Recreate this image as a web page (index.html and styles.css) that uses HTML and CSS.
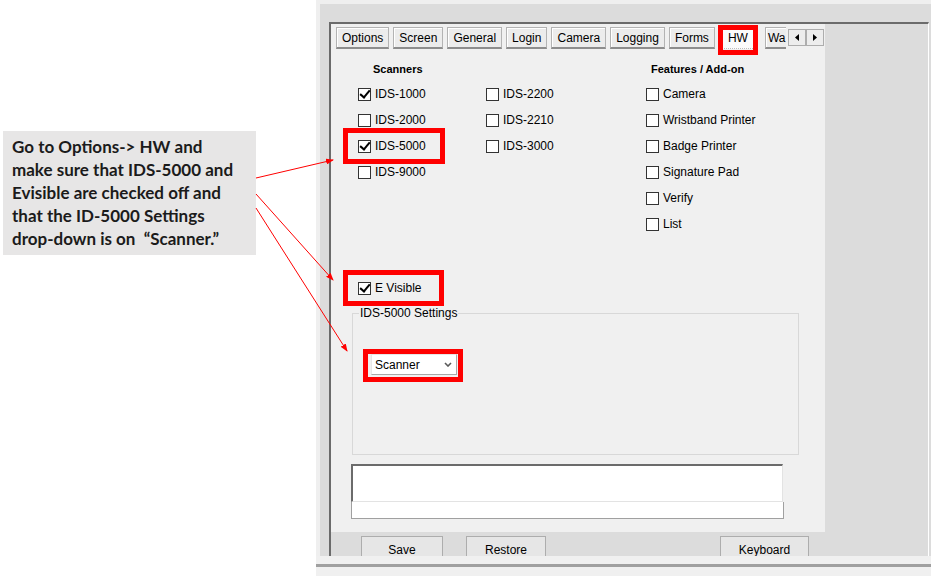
FILE: index.html
```html
<!DOCTYPE html>
<html lang="en">
<head>
  <meta charset="UTF-8" />
  <title>Options - HW</title>
  <link rel="stylesheet" href="styles.css">
</head>
<body>
<div class="page">

  <div class="note-col">
    <div class="note">
      Go to Options-&gt; HW and<br>
      make sure that IDS-5000 and<br>
      Evisible are checked off and<br>
      that the ID-5000 Settings<br>
      drop-down is on &nbsp;“Scanner.”
    </div>
  </div>

  <div class="app">
    <div class="window">
      <div class="frame">
        <div class="frame-top">
          <div class="tabctl">
            <div class="tabbar">
              <div class="tabs">
                <span class="tab">Options</span>
                <span class="tab">Screen</span>
                <span class="tab">General</span>
                <span class="tab">Login</span>
                <span class="tab">Camera</span>
                <span class="tab">Logging</span>
                <span class="tab">Forms</span>
                <span class="tab active hl hl-tab">HW</span>
                <span class="tab tab-cut">Wa</span>
              </div>
              <div class="scroll">
                <span class="arrow">
                  <svg width="4" height="7" viewBox="0 0 4 7"><polygon points="4,0 4,7 0,3.5" fill="#000"/></svg>
                </span>
                <span class="arrow">
                  <svg width="4" height="7" viewBox="0 0 4 7"><polygon points="0,0 0,7 4,3.5" fill="#000"/></svg>
                </span>
              </div>
            </div>

            <div class="tab-page">
              <div class="cols">
                <div class="group-scan">
                  <div class="heading">Scanners</div>
                  <div class="scan-grid">
                    <div class="checklist list-a">
                      <label class="check"><span class="box on"></span>IDS-1000</label>
                      <label class="check"><span class="box"></span>IDS-2000</label>
                      <label class="check hl hl-row"><span class="box on"></span>IDS-5000</label>
                      <label class="check"><span class="box"></span>IDS-9000</label>
                    </div>
                    <div class="checklist">
                      <label class="check"><span class="box"></span>IDS-2200</label>
                      <label class="check"><span class="box"></span>IDS-2210</label>
                      <label class="check"><span class="box"></span>IDS-3000</label>
                    </div>
                  </div>
                </div>
                <div class="group-feat">
                  <div class="heading">Features / Add-on</div>
                  <div class="checklist">
                    <label class="check"><span class="box"></span>Camera</label>
                    <label class="check"><span class="box"></span>Wristband Printer</label>
                    <label class="check"><span class="box"></span>Badge Printer</label>
                    <label class="check"><span class="box"></span>Signature Pad</label>
                    <label class="check"><span class="box"></span>Verify</label>
                    <label class="check"><span class="box"></span>List</label>
                  </div>
                </div>
              </div>

              <label class="check evisible hl hl-row"><span class="box on"></span>E Visible</label>

              <fieldset class="settings">
                <legend>IDS-5000 Settings</legend>
                <div class="combo hl hl-combo">
                  <span>Scanner</span>
                  <svg width="8" height="5" viewBox="0 0 8 5"><path d="M1 1 L4 4 L7 1" fill="none" stroke="#5a5a5a" stroke-width="1.6"/></svg>
                </div>
              </fieldset>

              <div class="memo"></div>
              <div class="memo-bar"></div>
            </div>
          </div>
        </div>

        <div class="button-row">
          <span class="btn btn-save">Save</span>
          <span class="btn btn-restore">Restore</span>
          <span class="btn btn-keyboard">Keyboard</span>
        </div>
      </div>
    </div>
    <div class="status"><div class="status-line"></div></div>
  </div>

  <!-- callout arrows drawn over the screenshot -->
  <svg class="arrows" width="931" height="576" viewBox="0 0 931 576">
    <defs>
      <marker id="head" markerWidth="8" markerHeight="6" refX="7" refY="3" orient="auto" markerUnits="userSpaceOnUse">
        <polygon points="0,0 8,3 0,6" fill="#ff0000"/>
      </marker>
    </defs>
    <line x1="256" y1="178" x2="333" y2="160" stroke="#ff0000" stroke-width="1" marker-end="url(#head)"/>
    <line x1="256" y1="194" x2="333" y2="280" stroke="#ff0000" stroke-width="1" marker-end="url(#head)"/>
    <line x1="256" y1="208" x2="347" y2="351" stroke="#ff0000" stroke-width="1" marker-end="url(#head)"/>
  </svg>
</div>
</body>
</html>
```

FILE: styles.css
```css
* {
  box-sizing: border-box;
}

body {
  margin: 0;
  background: #fff;
  font-family: "Liberation Sans", Arial, sans-serif;
  font-size: 12px;
  color: #000;
}

.page {
  position: relative;
  display: flex;
  width: 931px;
  height: 576px;
  overflow: hidden;
}

/* left side note */
.note-col {
  width: 316px;
  flex: none;
  padding: 131px 0 0 3px;
}

.note {
  width: 253px;
  height: 124px;
  background: #e7e6e6;
  padding: 4px 0 0 9px;
  font-family: Lato, "Open Sans", sans-serif;
  font-weight: 700;
  font-size: 17px;
  line-height: 23px;
  color: #1b1b1b;
  white-space: nowrap;
}

/* screenshot of the app */
.app {
  flex: 1;
  display: flex;
  flex-direction: column;
}

.window {
  height: 556px;
  background: #dcdcdc;
  border-top: 4px solid #efefef;
  border-left: 4px solid #efefef;
  display: flex;
  flex-direction: column;
}

.frame {
  height: 534px;
  margin: 18px 2px 0 9px;
  border-top: 2px solid #6b6b6b;
  border-left: 2px solid #6b6b6b;
  border-right: 1px solid #fff;
  overflow: hidden;
}

.frame-top {
  display: flex;
  height: 508px;
}

.tabctl {
  width: 494px;
  background: #f0f0f0;
  display: flex;
  flex-direction: column;
}

.tabbar {
  position: relative;
  z-index: 1;
  display: flex;
  height: 26px;
  padding: 3px 0 0 5px;
}

.tabs {
  display: flex;
  gap: 4px;
  width: 452px;
}

.tab {
  flex: none;
  height: 22px;
  line-height: 20px;
  padding: 0 5px;
  background: #ececec;
  border: 1px solid #b3b3b3;
  border-bottom: 2px solid #8d8d8d;
  box-shadow: inset 1px 1px 0 #fff;
  white-space: nowrap;
}

.tab.active {
  padding: 0 8px;
  margin-right: 4px;
  background: #fbfbfb;
  border-color: #e0e0e0;
  border-bottom: 1px dotted #bdbdbd;
  box-shadow: none;
}

/* last tab runs into the scroll arrows */
.tab-cut {
  width: 21px;
  padding: 0 0 0 2px;
  border-right: none;
}

.scroll {
  display: flex;
  margin-top: 2px;
}

.arrow {
  width: 18px;
  height: 17px;
  display: flex;
  align-items: center;
  justify-content: center;
  background: #ededed;
  border: 1px solid #adadad;
}

/* red highlight boxes */
.hl {
  position: relative;
}

.hl::after {
  content: '';
  position: absolute;
  border: 5px solid #ff0000;
  pointer-events: none;
}

.hl-tab::after {
  top: -3px;
  left: -2px;
  right: -2px;
  bottom: -7px;
}

.hl-row::after {
  top: -5px;
  left: -15px;
  right: -19px;
  bottom: -5px;
}

.evisible.hl-row::after {
  right: -23px;
}

.hl-combo::after {
  top: -6px;
  left: -9px;
  right: -7px;
  bottom: -8px;
}

/* tab page */
.tab-page {
  flex: 1;
  padding: 12px 0 0 20px;
}

.cols {
  display: flex;
  padding-left: 7px;
  height: 175px;
}

.group-scan {
  width: 288px;
}

.heading {
  font-size: 11px;
  font-weight: 700;
  line-height: 14px;
  margin-bottom: 5px;
}

.group-scan .heading {
  margin-left: 15px;
}

.group-feat .heading {
  margin-left: 5px;
}

.scan-grid {
  display: flex;
}

.list-a {
  width: 128px;
}

.checklist {
  display: flex;
  flex-direction: column;
  align-items: flex-start;
}

.check {
  display: flex;
  align-items: center;
  gap: 4px;
  width: fit-content;
  height: 26px;
  white-space: nowrap;
}

.box {
  width: 13px;
  height: 13px;
  flex: none;
  background: #fff;
  border: 1px solid #333;
  display: flex;
  align-items: center;
  justify-content: center;
}

.box.on::before {
  content: '';
  width: 4px;
  height: 8px;
  margin-top: -2px;
  border-right: 2px solid #000;
  border-bottom: 2px solid #000;
  transform: rotate(40deg);
}

.evisible {
  margin: 38px 0 0 7px;
}

.settings {
  margin: 5px 0 0 1px;
  width: 447px;
  padding: 0 0 79px 0;
  border: 1px solid #d8d8d8;
  min-width: 0;
}

.settings legend {
  margin-left: 6px;
  padding: 0 1px;
  line-height: 14px;
}

.combo {
  margin: 34px 0 0 18px;
  width: 86px;
  height: 21px;
  display: flex;
  align-items: center;
  justify-content: space-between;
  padding: 0 4px 0 3px;
  background: #fff;
  border: 1px solid #a8a8a8;
  border-top-color: #e6e6e6;
  border-left-color: #e6e6e6;
}

.memo {
  margin-top: 9px;
  width: 432px;
  height: 38px;
  background: #fff;
  border-top: 2px solid #6b6b6b;
  border-left: 2px solid #6b6b6b;
  border-right: 1px solid #e3e3e3;
  border-bottom: 1px solid #e3e3e3;
}

.memo-bar {
  width: 433px;
  height: 17px;
  background: #fff;
  border: 1px solid #a0a0a0;
  border-top: none;
}

/* buttons under the tab control */
.button-row {
  display: flex;
  padding: 4px 0 0 30px;
}

.btn {
  height: 26px;
  line-height: 26px;
  text-align: center;
  background: #e6e6e6;
  border: 1px solid #adadad;
}

.btn-save {
  width: 82px;
}

.btn-restore {
  width: 80px;
  margin-left: 23px;
}

.btn-keyboard {
  width: 89px;
  margin-left: 174px;
}

.status {
  height: 20px;
  padding-top: 8px;
  background: #f0f0f0;
}

.status-line {
  height: 3px;
  background: #a0a0a0;
}

.arrows {
  position: absolute;
  top: 0;
  left: 0;
  pointer-events: none;
}
```
